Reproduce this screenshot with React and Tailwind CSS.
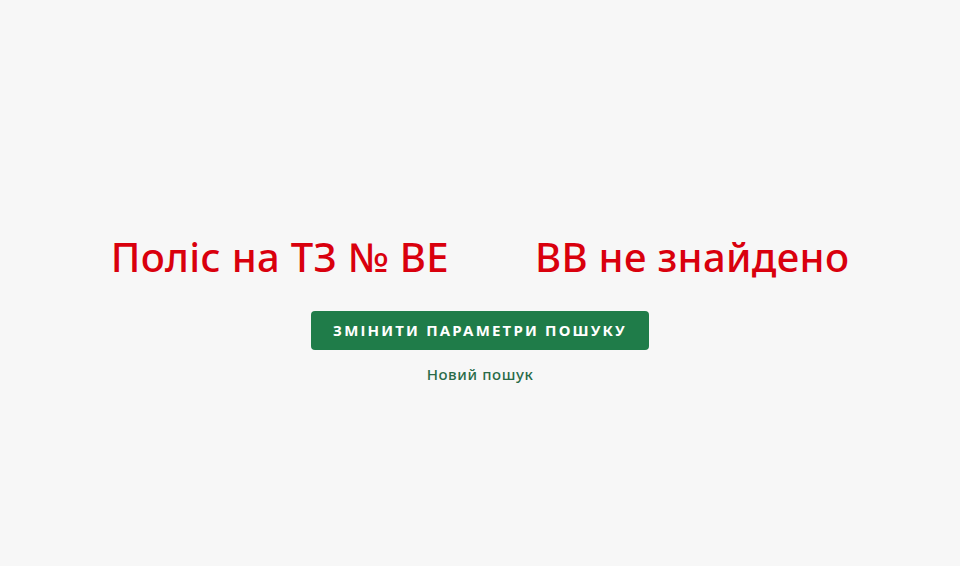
export default function App() {
  return (
    <div className="min-h-[566px] w-full bg-[#f7f7f7] flex flex-col items-center pt-[233px] font-['Noto_Sans',sans-serif]">
      {/* Headline with blank for the missing plate digits */}
      <h1 className="text-[40px] leading-[48px] font-medium tracking-[0.008em] text-[#d9000d] whitespace-nowrap">
        Поліс на ТЗ № ВЕ
        <span className="inline-block w-[86px]" />
        ВВ не знайдено
      </h1>

      <button
        type="button"
        className="mt-[30px] w-[338px] h-[39px] rounded-[4px] bg-[#1f7c49] text-white text-[15px] font-bold uppercase tracking-[0.145em] flex items-center justify-center"
      >
        Змінити параметри пошуку
      </button>

      <a href="#" className="mt-[13px] text-[15px] font-medium tracking-[0.04em] text-[#2a6b48] leading-[22px]">
        Новий пошук
      </a>
    </div>
  )
}
